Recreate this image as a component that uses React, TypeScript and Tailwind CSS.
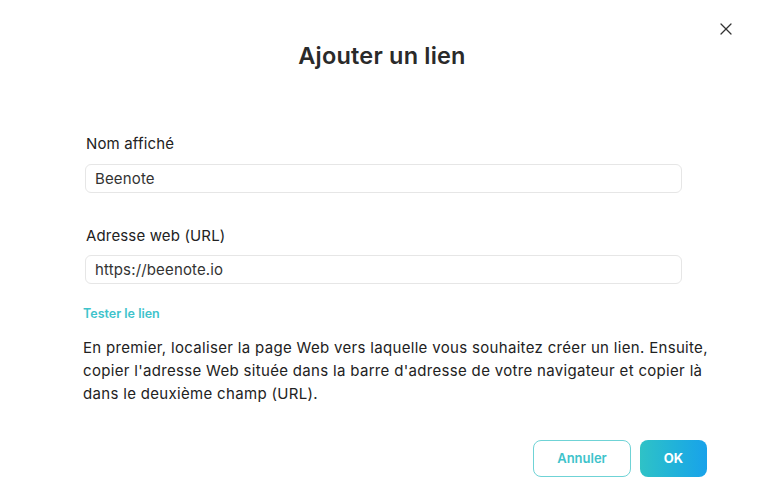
import { X } from 'lucide-react';

export default function App() {
  return (
    <div className="relative w-[764px] h-[486px] bg-white text-[#222] font-['Inter','Noto_Sans',sans-serif]">
      <button className="absolute right-[28px] top-[19px] text-[#333]">
        <X size={20} strokeWidth={1.5} />
      </button>
      <div className="pt-[40px] flex justify-center">
        <h1 className="text-[23.5px] font-semibold text-[#2a2a2a] leading-[32px] tracking-[0.2px]">Ajouter un lien</h1>
      </div>
      <div className="px-[85px] pt-[62px] w-[682px]">
        <label className="block text-[15px] font-normal leading-[20px] pl-[1px] tracking-[0.15px]">Nom affiché</label>
        <input
          defaultValue="Beenote"
          className="mt-[10px] block w-[597px] h-[29px] rounded-[6px] border border-[#e6e6e6] px-[9px] text-[15px] text-[#333] tracking-[0.15px] outline-none"
        />
        <label className="block mt-[33px] text-[15px] font-normal leading-[20px] pl-[1px] tracking-[0.15px]">Adresse web (URL)</label>
        <input
          defaultValue="https://beenote.io"
          className="mt-[9px] block w-[597px] h-[29px] rounded-[6px] border border-[#e6e6e6] px-[9px] text-[15px] text-[#333] tracking-[0.15px] outline-none"
        />
      </div>
      <div className="px-[83px] pt-[16px]">
        <a className="text-[12.5px] font-semibold text-[#3ec3cb] leading-[16px]">Tester le lien</a>
        <p className="mt-[12px] w-[640px] text-[15px] leading-[23px] text-[#222] tracking-[0.32px]">
          En premier, localiser la page Web vers laquelle vous souhaitez créer un lien. Ensuite, copier l'adresse Web située dans la barre d'adresse de votre navigateur et copier là dans le deuxième champ (URL).
        </p>
      </div>
      <div className="absolute right-[57px] top-[440px] flex gap-[9px]">
        <button className="w-[98px] h-[37px] rounded-[8px] border border-[#6fd3d6] text-[#3ec3cb] text-[13px] font-semibold">
          Annuler
        </button>
        <button className="w-[67px] h-[37px] rounded-[8px] bg-gradient-to-r from-[#2fc2c6] to-[#19a2ea] text-white text-[13px] font-bold">
          OK
        </button>
      </div>
    </div>
  );
}
